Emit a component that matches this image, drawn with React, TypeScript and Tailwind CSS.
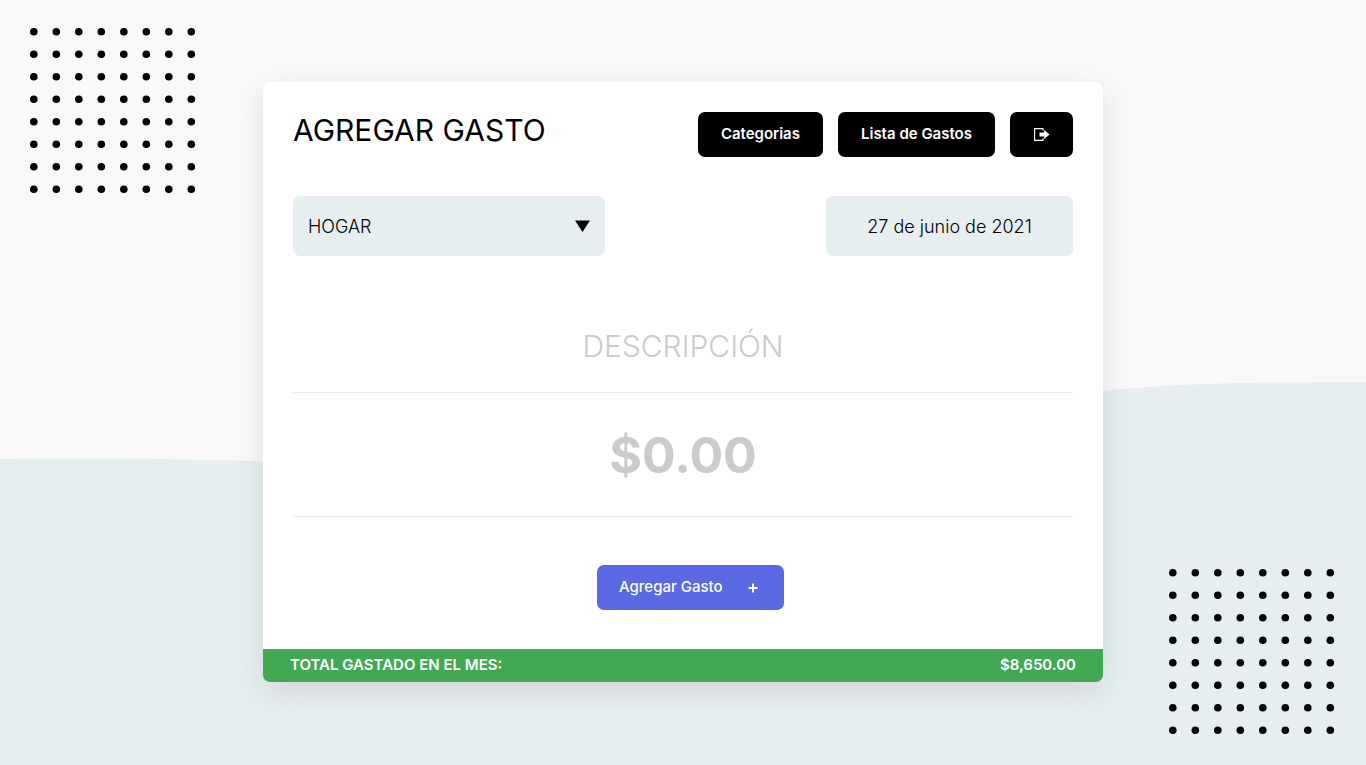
import { useState } from "react";

const DOTS = Array.from({ length: 64 }, (_, i) => i);

function DotGrid() {
  return (
    <svg width="166" height="166" viewBox="0 0 166 166" aria-hidden="true">
      {DOTS.map((i) => (
        <circle key={i} cx={3.8 + (i % 8) * 22.5} cy={3.8 + Math.floor(i / 8) * 22.5} r="3.8" />
      ))}
    </svg>
  );
}

function Wave() {
  return (
    <svg className="h-full w-full" viewBox="0 0 1366 383" preserveAspectRatio="none" aria-hidden="true">
      <path
        fill="#e7eef0"
        d="M0 77 C90 76 180 76.5 262 79.5 C560 94 830 28 1103 9 C1170 2 1230 0 1366 0 V383 H0 Z"
      />
    </svg>
  );
}

function ExitIcon() {
  return (
    <svg width="16" height="13" viewBox="0 0 16 13" aria-hidden="true">
      <path fill="none" stroke="#fff" strokeWidth="1.1" d="M9 2.8V.6H.6v11.8H9v-2.2" />
      <path fill="#fff" d="M5.5 4.5h4.7V2L15.6 6.5 10.2 11V8.5H5.5z" />
    </svg>
  );
}

const darkButton =
  "flex h-[45px] items-center justify-center rounded-[7px] bg-black px-[23px] text-[15px] font-semibold text-white";

export default function App() {
  const [description, setDescription] = useState("");
  const [amount, setAmount] = useState("");

  return (
    <div className="relative isolate flex min-h-screen items-center justify-center overflow-hidden bg-[#f9f9f9] px-4 pt-4 pb-[17px] font-['Inter','Open_Sans',sans-serif] text-black">
      <div className="absolute inset-x-0 bottom-0 -z-10 h-[50.1%]">
        <Wave />
      </div>
      <div className="absolute left-[30px] top-7 -z-10">
        <DotGrid />
      </div>
      <div className="absolute bottom-[30px] right-[31px] -z-10">
        <DotGrid />
      </div>

      <main className="flex w-full max-w-[840px] flex-col overflow-hidden rounded-[7px] bg-white shadow-[0_10px_30px_rgba(129,129,129,0.2)]">
        <header className="flex flex-wrap items-start justify-between gap-4 px-[30px] pt-[30px]">
          <h1 className="text-[30px] leading-9">AGREGAR GASTO</h1>
          <nav className="flex gap-[15px]">
            <a href="#categorias" className={darkButton}>
              Categorias
            </a>
            <a href="#lista" className={darkButton}>
              Lista de Gastos
            </a>
            <button type="button" aria-label="Cerrar sesión" className={`${darkButton} w-[63px]`}>
              <ExitIcon />
            </button>
          </nav>
        </header>

        <form className="flex flex-col px-[30px] pt-[39px]" onSubmit={(e) => e.preventDefault()}>
          <div className="flex justify-between gap-4">
            <div className="relative w-2/5">
              <select
                aria-label="Categoría"
                className="h-[60px] w-full appearance-none rounded-[7px] bg-[#e7eef0] px-[15px] pt-[2px] text-lg font-light"
              >
                <option>HOGAR</option>
              </select>
              <svg
                className="pointer-events-none absolute inset-y-0 right-[15px] my-auto"
                width="15"
                height="12"
                viewBox="0 0 15 12"
                aria-hidden="true"
              >
                <path d="M0 .5h15L7.5 12z" />
              </svg>
            </div>
            <button
              type="button"
              className="h-[60px] w-[247px] rounded-[7px] bg-[#e7eef0] pt-[2px] text-lg font-light"
            >
              27 de junio de 2021
            </button>
          </div>

          <input
            type="text"
            aria-label="Descripción"
            placeholder="DESCRIPCIÓN"
            value={description}
            onChange={(e) => setDescription(e.target.value)}
            className="mt-[43px] h-[94px] w-full border-b border-[#e7eef0] text-center text-[30px] font-light uppercase outline-none placeholder:text-[#cbcbcb]"
          />
          <input
            type="text"
            aria-label="Cantidad"
            placeholder="$0.00"
            value={amount}
            onChange={(e) => setAmount(e.target.value)}
            className="h-[124px] w-full border-b border-[#e7eef0] text-center text-[50px] font-bold outline-none placeholder:text-[#cbcbcb]"
          />

          <div className="flex justify-center pt-12 pb-[39px] pl-[15px]">
            <button
              type="submit"
              className="flex h-[45px] w-[187px] items-center justify-between rounded-[7px] bg-[#5b69e2] pl-[22px] pr-[26px] text-[15px] font-medium text-white"
            >
              Agregar Gasto
              <svg width="10" height="10" viewBox="0 0 10 10" aria-hidden="true">
                <path fill="#fff" d="M4 .5h2V4h3.5v2H6v3.5H4V6H.5V4H4z" />
              </svg>
            </button>
          </div>
        </form>

        <footer className="flex h-[33px] items-center justify-between bg-[#43a854] px-[27px] text-[15px] font-semibold text-white">
          <p>TOTAL GASTADO EN EL MES:</p>
          <p>$8,650.00</p>
        </footer>
      </main>
    </div>
  );
}
